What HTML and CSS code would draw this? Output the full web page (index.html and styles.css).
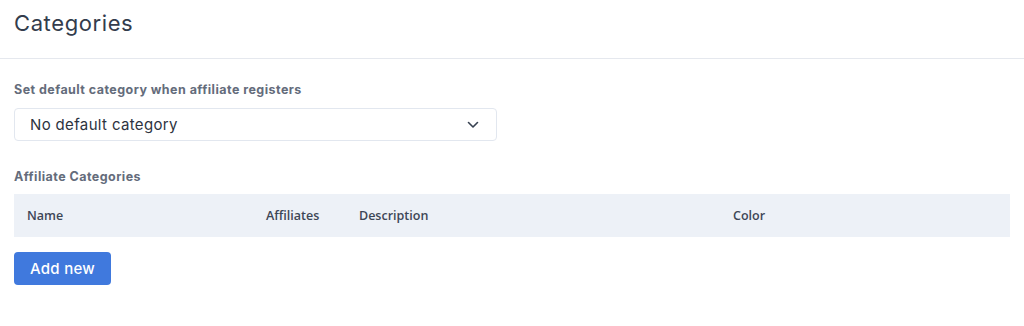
FILE: index.html
```html
<!DOCTYPE html>
<html>
<head>
<meta charset="utf-8">
<link rel="stylesheet" href="styles.css">
</head>
<body>
<div class="page">
  <header class="page-header">
    <h1 class="title">Categories</h1>
  </header>
  <section class="content">
    <label class="field-label">Set default category when affiliate registers</label>
    <div class="select">
      <span class="select-value">No default category</span>
      <svg class="chevron" width="12" height="8" viewBox="0 0 12 8"><path d="M1.5 1.5 L6 6 L10.5 1.5" fill="none" stroke="#374151" stroke-width="1.6" stroke-linecap="round" stroke-linejoin="round"/></svg>
    </div>
    <div class="field-label section-label">Affiliate Categories</div>
    <table class="table">
      <thead>
        <tr>
          <th class="col-name">Name</th>
          <th class="col-aff">Affiliates</th>
          <th class="col-desc">Description</th>
          <th class="col-color">Color</th>
        </tr>
      </thead>
    </table>
    <button class="btn">Add new</button>
  </section>
</div>
</body>
</html>
```
FILE: styles.css
```css
html, body {
  margin: 0;
  padding: 0;
  background: #ffffff;
}
body {
  font-family: Inter, "Noto Sans", sans-serif;
  color: #374151;
}
.page-header {
  height: 59px;
  border-bottom: 1px solid #e5e8ee;
  box-sizing: border-box;
  padding: 9px 14px 0;
}
.title {
  margin: 0;
  font-size: 22px;
  font-weight: 400;
  color: #333c4c;
  line-height: 28px;
  letter-spacing: 0.6px;
}
.content {
  padding: 22px 14px 0;
}
.field-label {
  display: block;
  font-size: 12.5px;
  font-weight: 700;
  color: #646c7b;
  line-height: 18px;
  letter-spacing: 0.45px;
}
.select {
  margin-top: 9px;
  width: 483px;
  height: 33px;
  box-sizing: border-box;
  border: 1px solid #e2e7ef;
  border-radius: 4px;
  display: flex;
  align-items: center;
  justify-content: space-between;
  padding: 0 17px 0 15px;
}
.select-value {
  font-size: 15px;
  color: #2d3340;
  letter-spacing: 0.35px;
}
.section-label {
  margin-top: 27px;
}
.table {
  margin-top: 8px;
  width: 996px;
  border-collapse: collapse;
  table-layout: fixed;
}
.table th {
  background: #edf1f7;
  height: 43px;
  padding: 0 13px;
  text-align: left;
  font-family: "Open Sans", sans-serif;
  font-size: 12.5px;
  font-weight: 600;
  color: #3d4656;
}
.col-name { width: 213px; }
.col-aff { width: 67px; }
.col-desc { width: 348px; }
.btn {
  margin-top: 15px;
  width: 97px;
  height: 33px;
  border: none;
  border-radius: 4px;
  background: #4079dd;
  color: #ffffff;
  font-family: Inter, "Noto Sans", sans-serif;
  font-size: 15px;
  font-weight: 500;
  letter-spacing: 0.3px;
  padding: 0;
  display: block;
}
```
